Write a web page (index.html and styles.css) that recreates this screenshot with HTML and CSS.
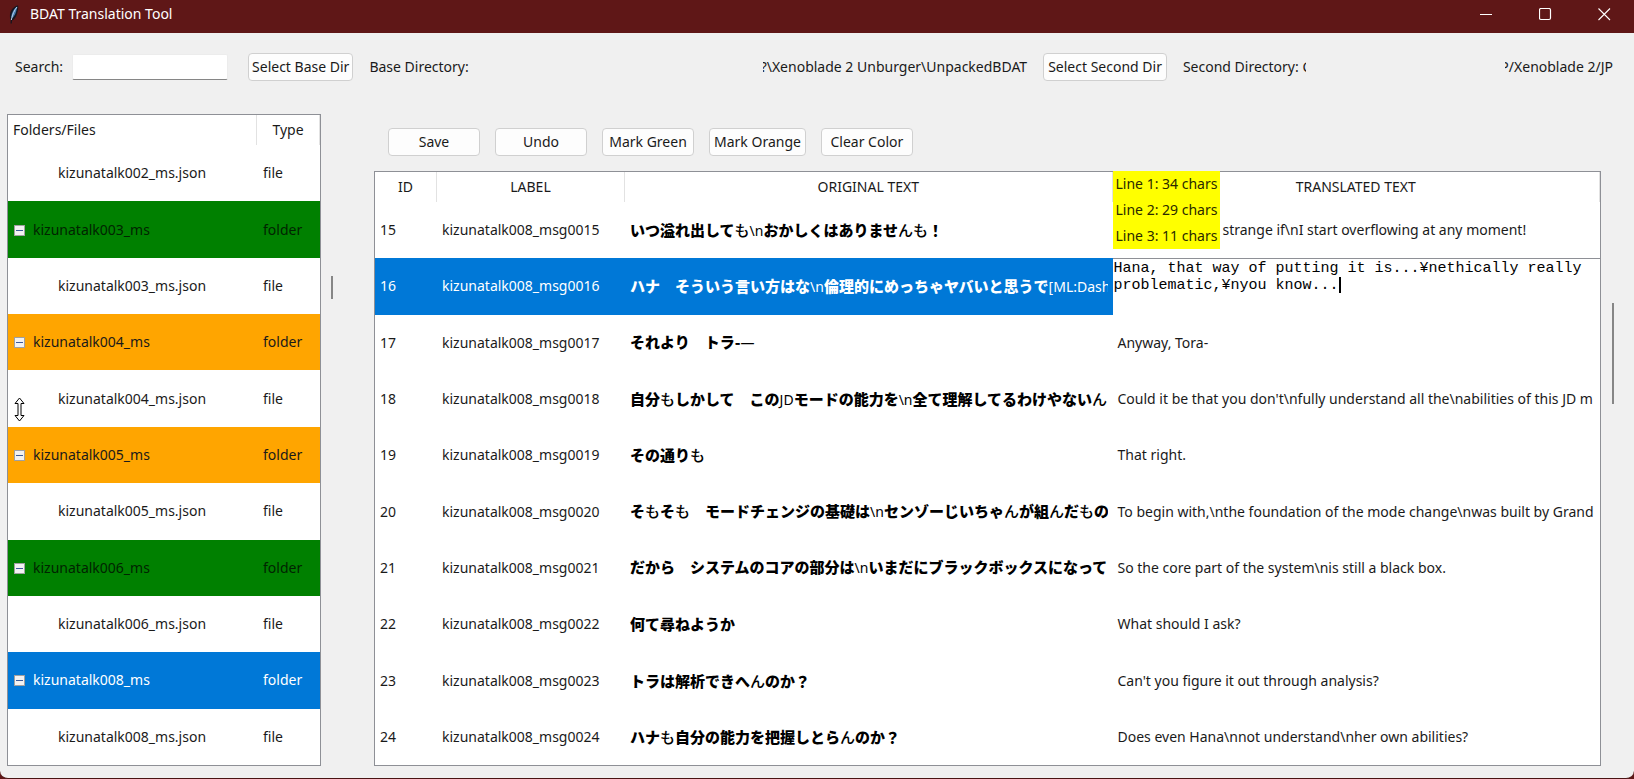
FILE: index.html
```
<!DOCTYPE html>
<html lang="en">
<head>
<meta charset="utf-8">
<title>BDAT Translation Tool</title>
<link rel="stylesheet" href="styles.css">
</head>
<body>
<div class="window">
  <header class="titlebar">
    <svg class="app-icon" width="12" height="19" viewBox="0 0 12 19" aria-hidden="true">
      <path d="M10 0.500C6 1 2.500 5 2 9.500C1.800 12 2 14 2.800 15L2.500 18.500L3.800 18.500L4 15.500C6 15 8 12 9 9C9.800 6 10.800 3 10 0.500Z" fill="#15151f"/>
      <path d="M9.300 1.500C6.500 3 3.700 7 3.300 12L4.500 13C6.500 11 8 8 8.500 5Z" fill="#4679ad"/>
      <path d="M9 2C6.500 5 4.500 9 3.300 15" stroke="#b8d4ec" stroke-width="1" fill="none"/>
    </svg>
    <h1 class="title">BDAT Translation Tool</h1>
    <div class="window-controls">
      <button class="window-button" aria-label="Minimize"><svg width="13" height="13" viewBox="0 0 13 13"><path d="M0 6.500H12" stroke="#fff" fill="none"/></svg></button>
      <button class="window-button" aria-label="Maximize"><svg width="13" height="13" viewBox="0 0 13 13"><rect x=".5" y=".5" width="11" height="11" rx="1.500" stroke="#fff" stroke-width="1.200" fill="none"/></svg></button>
      <button class="window-button" aria-label="Close"><svg width="13" height="13" viewBox="0 0 13 13"><path d="M.5 .5L12 12M12 .5L.5 12" stroke="#fff" stroke-width="1.100" fill="none"/></svg></button>
    </div>
  </header>

  <div class="toolbar">
    <label for="search">Search:</label>
    <input class="search" id="search" type="text">
    <button class="button base-button">Select Base Dir</button>
    <div class="directory base"><span>Base Directory:</span><span class="path"><span class="cut-left">?</span>\Xenoblade 2 Unburger\UnpackedBDAT</span></div>
    <button class="button second-button">Select Second Dir</button>
    <div class="directory"><span class="path">Second Directory:&nbsp;<span class="cut-right">C</span></span><span class="path"><span class="cut-left">P</span>/Xenoblade 2/JP</span></div>
  </div>

  <main class="panes">
    <section class="tree-pane">
      <table class="grid">
        <colgroup><col><col class="col-type"></colgroup>
        <thead><tr><th class="left">Folders/Files</th><th>Type</th></tr></thead>
        <tbody>
          <tr><td class="file">kizunatalk002_ms.json</td><td>file</td></tr>
          <tr class="green"><td><button class="toggle" aria-label="Collapse"></button>kizunatalk003_ms</td><td>folder</td></tr>
          <tr><td class="file">kizunatalk003_ms.json</td><td>file</td></tr>
          <tr class="orange"><td><button class="toggle" aria-label="Collapse"></button>kizunatalk004_ms</td><td>folder</td></tr>
          <tr><td class="file">kizunatalk004_ms.json
            <svg class="pointer" width="11" height="25" viewBox="0 0 11 25" aria-hidden="true"><path d="M5.500 1L10 6.500H7V18.500H10L5.500 24L1 18.500H4V6.500H1Z" fill="#fff" stroke="#000" stroke-width="1"/></svg>
          </td><td>file</td></tr>
          <tr class="orange"><td><button class="toggle" aria-label="Collapse"></button>kizunatalk005_ms</td><td>folder</td></tr>
          <tr><td class="file">kizunatalk005_ms.json</td><td>file</td></tr>
          <tr class="green"><td><button class="toggle" aria-label="Collapse"></button>kizunatalk006_ms</td><td>folder</td></tr>
          <tr><td class="file">kizunatalk006_ms.json</td><td>file</td></tr>
          <tr class="selected"><td><button class="toggle" aria-label="Collapse"></button>kizunatalk008_ms</td><td>folder</td></tr>
          <tr><td class="file">kizunatalk008_ms.json</td><td>file</td></tr>
        </tbody>
      </table>
    </section>

    <div class="tree-scroll"><div class="thumb thumb-small"></div></div>

    <section class="editor-pane">
      <div class="actions">
        <button class="button action">Save</button>
        <button class="button action">Undo</button>
        <button class="button action">Mark Green</button>
        <button class="button action">Mark Orange</button>
        <button class="button action">Clear Color</button>
      </div>
      <div class="entries">
        <table class="grid">
          <colgroup><col class="col-id"><col class="col-label"><col><col></colgroup>
          <thead><tr><th>ID</th><th>LABEL</th><th>ORIGINAL TEXT</th><th>TRANSLATED TEXT
            <div class="counts"><div>Line 1: 34 chars</div><div>Line 2: 29 chars</div><div>Line 3: 11 chars</div></div>
          </th></tr></thead>
          <tbody>
            <tr><td>15</td><td>kizunatalk008_msg0015</td><td class="jp" lang="ja">いつ溢れ出して<i>も</i><b>\n</b>おかしくはありませ<i>んも</i>！</td><td class="covered">strange if\nI start overflowing at any moment!</td></tr>
            <tr class="selected"><td>16</td><td>kizunatalk008_msg0016</td><td class="jp" lang="ja">ハナ　そういう言い方はな<b>\n</b>倫理的にめっちゃヤバいと思うで<b>[ML:Dash</b></td><td class="editing"><div class="edit-box"><textarea class="edit-text" aria-label="Translated text" spellcheck="false">Hana, that way of putting it is...¥nethically really problematic,¥nyou know...</textarea><span class="caret"></span></div></td></tr>
            <tr><td>17</td><td>kizunatalk008_msg0017</td><td class="jp" lang="ja">それより　トラ-<b>—</b></td><td>Anyway, Tora-</td></tr>
            <tr><td>18</td><td>kizunatalk008_msg0018</td><td class="jp" lang="ja">自分<i>も</i>しかして　この<b>JD</b>モードの能力を<b>\n</b>全て理解してるわけやない<i>ん</i></td><td>Could it be that you don't\nfully understand all the\nabilities of this JD m</td></tr>
            <tr><td>19</td><td>kizunatalk008_msg0019</td><td class="jp" lang="ja">その通り<i>も</i></td><td>That right.</td></tr>
            <tr><td>20</td><td>kizunatalk008_msg0020</td><td class="jp" lang="ja">そ<i>も</i>そ<i>も</i>　モードチェンジの基礎は<b>\n</b>センゾーじいちゃ<i>ん</i>が組<i>ん</i>だ<i>も</i>の</td><td>To begin with,\nthe foundation of the mode change\nwas built by Grand</td></tr>
            <tr><td>21</td><td>kizunatalk008_msg0021</td><td class="jp" lang="ja">だから　システムのコアの部分は<b>\n</b>いまだにブラックボックスになって</td><td>So the core part of the system\nis still a black box.</td></tr>
            <tr><td>22</td><td>kizunatalk008_msg0022</td><td class="jp" lang="ja">何て尋ねようか</td><td>What should I ask?</td></tr>
            <tr><td>23</td><td>kizunatalk008_msg0023</td><td class="jp" lang="ja">トラは解析できへ<i>ん</i>のか？</td><td>Can't you figure it out through analysis?</td></tr>
            <tr><td>24</td><td>kizunatalk008_msg0024</td><td class="jp" lang="ja">ハナ<i>も</i>自分の能力を把握しとら<i>ん</i>のか？</td><td>Does even Hana\nnot understand\nher own abilities?</td></tr>
          </tbody>
        </table>
      </div>
    </section>

    <div class="entries-scroll"><div class="thumb thumb-large"></div></div>
  </main>
</div>
</body>
</html>
```
FILE: styles.css
```
* { box-sizing: border-box; }
body {
  margin: 0;
  background: #5f1717;
  color: #1a1a1a;
  font: 14px/20px "Noto Sans", "Noto Sans CJK JP", sans-serif;
}
button, input { font: inherit; color: inherit; }

.window {
  min-height: 100vh;
  display: flex;
  flex-direction: column;
  background: #f0f0f0;
  border-bottom: 1px solid #4a1414;
  border-radius: 0 0 8px 8px;
}

.titlebar {
  display: flex;
  align-items: center;
  height: 33px;
  padding: 0 0 5px 8px;
  gap: 10px;
  background: #5f1717;
  color: #fff;
}
.title { flex: 1; margin: 0; font-size: 14px; font-weight: 400; }
.window-controls { display: flex; }
.window-button {
  display: flex;
  justify-content: center;
  align-items: center;
  width: 59px;
  height: 28px;
  padding: 0;
  border: 0;
  background: transparent;
}

.toolbar {
  display: flex;
  align-items: center;
  height: 68px;
  padding: 0 21px 0 15px;
  white-space: nowrap;
}
.search {
  width: 156px;
  height: 26px;
  margin: 0 20px 0 9px;
  border: 1px solid #ececec;
  border-bottom: 1px solid #868686;
  border-radius: 2px;
  background: #fff;
}
.button {
  height: 28px;
  padding: 0 4px;
  border: 1px solid #d0d0d0;
  border-radius: 4px;
  background: #fdfdfd;
  white-space: nowrap;
}
.base-button { padding: 0 3px; }
.second-button { margin-left: 16px; }
.directory {
  display: flex;
  flex: 17 1 0;
  justify-content: space-between;
  margin-left: 16px;
}
.directory.base { flex-grow: 26; }
.path { display: flex; }
.cut-left, .cut-right { display: flex; width: 4px; overflow: hidden; }
.cut-left { justify-content: flex-end; }

.panes {
  display: flex;
  flex: 1;
  padding: 13px 0 12px 7px;
}
.tree-pane {
  display: flex;
  width: 314px;
  border: 1px solid #8e9096;
  background: #fff;
}
.tree-scroll { width: 53px; padding: 162px 0 0 10px; }
.thumb { width: 2px; background: #868686; }
.thumb-small { height: 23px; }
.editor-pane { display: flex; flex: 1; flex-direction: column; min-width: 0; }
.entries-scroll { width: 33px; padding: 189px 0 0 11px; }
.thumb-large { height: 101px; }

.actions { display: flex; gap: 15px; padding: 14px 14px 15px; }
.action { min-width: 92px; }
.entries {
  display: flex;
  flex: 1;
  border: 1px solid #8e9096;
  background: #fff;
}

.grid { width: 100%; border-collapse: separate; border-spacing: 0; table-layout: fixed; }
.col-type { width: 63px; }
.col-id { width: 62px; }
.col-label { width: 188px; }
.grid th {
  position: relative;
  height: 30px;
  padding: 0;
  border-right: 1px solid #e2e2e2;
  font-weight: 400;
}
.grid th.left { padding-left: 5px; text-align: left; }
/* The transparent border keeps clipped text clear of the next column. */
.grid td {
  height: 56px;
  padding: 0 0 0 5px;
  border-right: 5px solid transparent;
  overflow: hidden;
  white-space: nowrap;
}
.tree-pane td { position: relative; padding-left: 6px; }
.grid td.file { padding-left: 50px; }
.green { background: #008000; color: #002400; }
.orange { background: #ffa500; }
.selected { background: #0078d7; color: #fff; }
.toggle {
  width: 11px;
  height: 11px;
  margin-right: 8px;
  padding: 0;
  border: 1px solid #a0a0a0;
  vertical-align: 0;
  background:
    linear-gradient(#3c5a9a, #3c5a9a) center / 7px 1px no-repeat,
    #f2f2f2;
}
.pointer { position: absolute; left: 6px; bottom: 5px; }

.jp {
  color: #000;
  font-family: "Noto Sans CJK JP", sans-serif;
  font-size: 15px;
  font-weight: 900;
}
.selected .jp { color: #fff; }
.jp i { font-style: normal; font-weight: 500; }
.jp b { font: 14px/20px "Noto Sans", sans-serif; }
.grid td.covered { padding-left: 110px; }

.counts {
  position: absolute;
  z-index: 1;
  top: -1px;
  left: 0;
  padding: 0 3px;
  background: #ff0;
  color: #2a2a00;
  line-height: 26px;
  text-align: left;
  white-space: nowrap;
}
.grid td.editing { padding: 0; border: 0; background: #fff; }
.edit-box { position: relative; height: 56px; font: 15px/17px "Liberation Mono", monospace; }
.edit-text {
  display: block;
  width: 100%;
  height: 100%;
  padding: 1px;
  border: 0;
  border-top: 1px solid #8e9096;
  outline: 0;
  resize: none;
  overflow: hidden;
  background: #fff;
  color: #000;
  font: inherit;
}
.caret {
  position: absolute;
  top: 19px;
  left: calc(25ch + 1px);
  width: 2px;
  height: 16px;
  background: #000;
}
```
